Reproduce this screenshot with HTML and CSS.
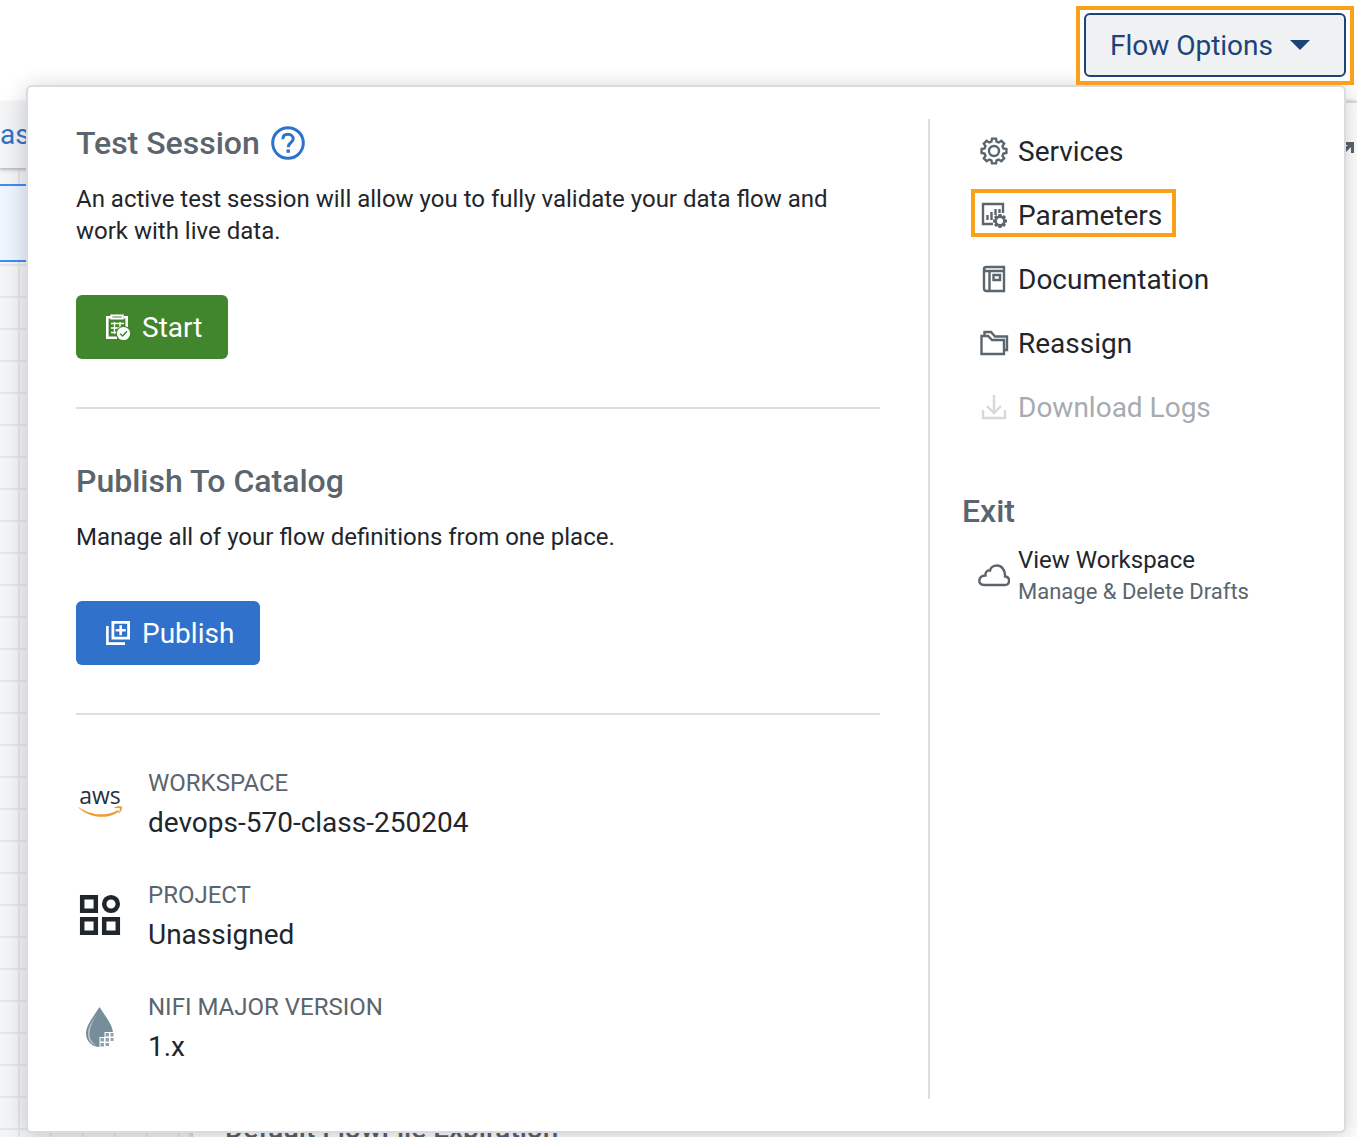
FILE: index.html
```html
<!DOCTYPE html>
<html lang="en">
<head>
<meta charset="utf-8">
<title>Flow Designer</title>
<link rel="stylesheet" href="styles.css">
</head>
<body>
<svg class="defs" aria-hidden="true">
  <symbol id="gear" viewBox="-14 -14 28 28">
    <path d="M-2.6-9.4L-2-12.4H2L2.6-9.4L4.81-8.49L7.35-10.18L10.18-7.35L8.49-4.81L9.4-2.6L12.4-2V2L9.4 2.6L8.49 4.81L10.18 7.35L7.35 10.18L4.81 8.49L2.6 9.4L2 12.4H-2L-2.6 9.4L-4.81 8.49L-7.35 10.18L-10.18 7.35L-8.49 4.81L-9.4 2.6L-12.4 2V-2L-9.4-2.6L-8.49-4.81L-10.18-7.35L-7.35-10.18L-4.81-8.49Z"/>
    <circle r="5"/>
  </symbol>
</svg>
<header class="header">
  <div class="callout">
    <button class="options-button" type="button" aria-expanded="true">Flow Options
      <svg width="20" height="10" viewBox="0 0 20 10"><path d="M0 0H20L10 10Z" fill="currentColor"/></svg>
    </button>
  </div>
</header>
<div class="toolbar"><a class="crumb" href="#">as</a></div>
<main class="workspace">
  <div class="canvas"><div class="selected-node"></div></div>
  <aside class="details">
    <svg class="expand" width="12" height="12" viewBox="0 0 12 12"><path d="M3 0H12V11H9V5L3 11L0 8L6 3H3Z" fill="#5a656d"/></svg>
    <div class="details-label">Default FlowFile Expiration</div>
  </aside>
</main>

<div class="menu">
  <div class="menu-main">
    <section class="section">
      <h2 class="title">Test Session
        <svg width="34" height="34" viewBox="0 0 34 34" fill="none" stroke="#2f72cb" stroke-width="3"><circle cx="17" cy="17" r="15.3"/><path d="M11.8 13.2C11.8 10 14 8.3 17 8.3S22.2 10.2 22.2 13C22.2 16.6 17.2 16.6 17.2 21.2"/><path d="M15.5 25.1H18.9" stroke-width="3.4"/></svg>
      </h2>
      <p class="description">An active test session will allow you to fully validate your data flow and work with live data.</p>
      <button class="action start" type="button">
        <svg width="28" height="28" viewBox="0 0 28 28" fill="none" stroke="#fff"><path d="M8 4.200H3.300V24.700H13M20 4.200H22.700V14" stroke-width="2.600"/><path d="M7.400 2.400H18.800V5.600H7.400Z" stroke-width="2"/><path d="M7 10.500H20M7 15H17M7 19.500H13M10.500 9V21M16 9V15" stroke-width="1.400"/><circle cx="19.500" cy="20.500" r="7.600" fill="#41852d" stroke="none"/><circle cx="19.500" cy="20.500" r="6.600" fill="#fff" stroke="none"/><path d="M16.200 20.700L18.600 23L23 18.200" stroke="#41852d" stroke-width="1.500"/></svg>
        Start
      </button>
    </section>
    <section class="section">
      <h2 class="title">Publish To Catalog</h2>
      <p class="description">Manage all of your flow definitions from one place.</p>
      <button class="action publish" type="button">
        <svg width="28" height="28" viewBox="0 0 28 28" fill="none" stroke="#fff" stroke-width="2.8"><path d="M8.9 3.4H24.6V19.1H8.9Z"/><path d="M3.4 7V24.6H21M16.7 6.2V16.2M11.7 11.2H21.7" stroke-width="2.6"/></svg>
        Publish
      </button>
    </section>
    <dl class="facts">
      <div class="fact">
        <svg width="48" height="48" viewBox="0 0 48 48"><text class="aws" x="24" y="25" text-anchor="middle">aws</text><path d="M3 28.200C14.500 36.400 29 37.600 41.400 31.400C42.600 30.900 43.500 32.100 42.400 32.900C31 40.500 14 39.500 2.600 28.800C2.300 28.300 2.600 28 3 28.200ZM38.300 28.600C41 26.900 45.300 26.900 46 27.800C46.500 28.800 45.200 32.900 43.100 34.500C42.700 34.700 42.500 34.500 42.700 34.100C43.400 32.400 44.200 30.200 43.800 29.600C43.200 28.800 40.400 29.100 38.600 29.300C38 29.300 38 28.900 38.300 28.600Z" fill="#f19a32"/></svg>
        <div><dt>WORKSPACE</dt><dd>devops-570-class-250204</dd></div>
      </div>
      <div class="fact">
        <svg width="48" height="48" viewBox="0 0 48 48" fill="none" stroke="#1f262c" stroke-width="4.500"><path d="M6.200 6.200H19.800V19.800H6.200ZM6.200 28.200H19.800V41.800H6.200ZM28.200 28.200H41.800V41.800H28.200Z"/><circle cx="35" cy="13" r="6.800"/></svg>
        <div><dt>PROJECT</dt><dd>Unassigned</dd></div>
      </div>
      <div class="fact">
        <svg width="48" height="48" viewBox="0 0 48 48"><path d="M23.500 4C18 13 10 22 10 30.500A13.500 13.500 0 0 0 24 44H28L37 34V30.500C37 22 29 13 23.500 4Z" fill="#768d9a"/><path d="M21 11C16 19 12 24 12 30.500C12 37 15 41 20 42C14 38 13 33 13.600 29C14 23 18 17 21 11Z" fill="#b9c6cd"/><path d="M23.500 34H28.500V29H38V39H33.500V44H23.500Z" fill="#fff"/><path d="M24.500 35H28V38.500H24.500ZM24.500 40H28V43.500H24.500ZM29.500 30H33V33.500H29.500ZM29.500 35H33V38.500H29.500ZM34.500 30H37.500V33.500H34.500ZM34.500 35H37.500V38H34.500ZM29.500 40H33V43H29.500Z" fill="#90a2ad"/></svg>
        <div><dt>NIFI MAJOR VERSION</dt><dd>1.x</dd></div>
      </div>
    </dl>
  </div>
  <nav class="menu-side">
    <div class="links">
      <button class="link" type="button"><svg class="icon" viewBox="0 0 32 32"><use href="#gear" x="2" y="2" width="28" height="28"/></svg>Services</button>
      <button class="link highlighted" type="button"><svg class="icon" viewBox="0 0 32 32"><path d="M15 25H5V5H25V14" /><path d="M9.5 21V16M13.5 21V13M17.5 16V10M21.5 14V10" stroke-width="2.4"/><g transform="translate(22 22) scale(.52)"><path d="M-2.6-9.4L-2-12.4H2L2.6-9.4L4.81-8.49L7.35-10.18L10.18-7.35L8.49-4.81L9.4-2.6L12.4-2V2L9.4 2.6L8.49 4.81L10.18 7.35L7.35 10.18L4.81 8.49L2.6 9.4L2 12.4H-2L-2.6 9.4L-4.81 8.49L-7.35 10.18L-10.18 7.35L-8.49 4.81L-9.4 2.6L-12.4 2V-2L-9.4-2.6L-8.49-4.81L-10.18-7.35L-7.35-10.18L-4.81-8.49Z" fill="#5a656d" stroke-width="2"/><circle r="5.8" fill="#fff" stroke="none"/></g></svg>Parameters</button>
      <button class="link" type="button"><svg class="icon" viewBox="0 0 32 32"><path d="M26 8V4H8.500Q6 4 6 6V25.500Q6 28 8.500 28H26V8H8.500Q6 8 6 6M11.500 8V28M15.500 12H22V17H15.500Z"/></svg>Documentation</button>
      <button class="link" type="button"><svg class="icon" viewBox="0 0 32 32"><path d="M3.500 9H10L14 13H26V27H3.500Z"/><path d="M6.500 8V5H13L17 9.500H29V23H27"/></svg>Reassign</button>
      <button class="link" type="button" disabled><svg class="icon" viewBox="0 0 32 32"><path d="M5 19V27H27V19M16 4V21M9 15L16 22L23 15"/></svg>Download Logs</button>
    </div>
    <h2 class="title">Exit</h2>
    <a class="exit-link" href="#">
      <svg class="icon" viewBox="0 0 32 32"><path d="M6 25H26.500C32.500 25 32.500 17 27 16.500C27.500 9.500 23 5.500 19 5.500C15 5.500 12.500 8 12 10.500C9.500 10 7 12 7.500 15.500C-.5 16-.5 25 6 25Z"/></svg>
      <span class="exit-text"><span>View Workspace</span><small>Manage &amp; Delete Drafts</small></span>
    </a>
  </nav>
</div>
</body>
</html>
```
FILE: styles.css
```css
* { box-sizing: border-box; }

body {
  margin: 0;
  height: 100vh;
  overflow: hidden;
  display: flex;
  flex-direction: column;
  position: relative;
  background: #fff;
  color: #1f262c;
  font-family: Roboto, sans-serif;
  font-size: 28px;
}

h2, p, dl, dd { margin: 0; }
button { font: inherit; cursor: pointer; }
svg { flex: none; }
.defs { position: absolute; width: 0; height: 0; }

/* Page behind the menu */
.header {
  flex: none;
  height: 101px;
  display: flex;
  justify-content: flex-end;
  align-items: flex-start;
  padding: 6px 3px;
}
.callout {
  position: relative;
  z-index: 2;
  border: 4px solid #f9a11b;
  padding: 3px 4px 4px;
  background: #fff;
}
.options-button {
  display: flex;
  align-items: center;
  gap: 17px;
  height: 64px;
  padding: 0 34px 0 24px;
  border: 2px solid #1b4478;
  border-radius: 6px;
  background: #f0f1f3;
  color: #1b4478;
}
.toolbar {
  flex: none;
  height: 67px;
  background: #f3f4f6;
  line-height: 68px;
  box-shadow: 0 2px 4px #0003;
  position: relative;
}
.crumb { color: #2f72cb; text-decoration: none; }
.workspace { flex: 1; display: flex; min-height: 0; }
.canvas {
  width: 193px;
  padding-top: 16px;
  background:
    linear-gradient(90deg, #e5e7ea 2px, transparent 2px) 18px 0 / 32px 100%,
    linear-gradient(#e5e7ea 2px, transparent 2px) 0 0 / 100% 32px,
    #f4f5f7;
}
.selected-node {
  height: 78px;
  border: solid #3f8cf2;
  border-width: 2px 0;
  background: #edf5fe;
}
.details {
  position: relative;
  z-index: 1;
  flex: 1;
  display: flex;
  flex-direction: column;
  justify-content: flex-end;
  margin-top: -67px;
  border-top: 2px solid #d9dbe0;
  background: #fff;
  box-shadow: -2px 0 4px #0003;
}
.expand { position: absolute; top: 39px; right: 3px; }
.details-label {
  margin: 0 0 -8px 32px;
  color: #5a656d;
  font-weight: 500;
  line-height: 32px;
}

/* Flow options menu */
.menu {
  position: absolute;
  z-index: 1;
  top: 85px;
  left: 26px;
  right: 11px;
  display: flex;
  padding: 32px 32px 32px 48px;
  border: 2px solid #d9dbe0;
  border-radius: 6px;
  background: #fff;
  box-shadow: 0 4px 24px #0003;
}
.menu-main { flex: 1; padding-right: 48px; }
.menu-side {
  width: 384px;
  padding: 8px 0 0 32px;
  border-left: 2px solid #dcdee0;
}
.title {
  display: flex;
  align-items: center;
  gap: 11px;
  color: #5a656d;
  font-size: 32px;
  font-weight: 500;
  line-height: 48px;
}
.section {
  margin-bottom: 48px;
  padding-bottom: 48px;
  border-bottom: 2px solid #dcdee0;
}
.description {
  margin: 16px 0 48px;
  font-size: 24px;
  line-height: 32px;
}
.action {
  display: flex;
  align-items: center;
  gap: 10px;
  height: 64px;
  padding: 0 26px 0 28px;
  border: 0;
  border-radius: 6px;
  color: #fff;
}
.start { background: #41852d; }
.publish { background: #3072cb; }

.facts {
  display: flex;
  flex-direction: column;
  gap: 32px;
  padding-bottom: 32px;
  line-height: 40px;
}
.fact { display: flex; align-items: center; gap: 24px; }
.fact dt { color: #5a656d; font-size: 24px; }
.aws { font: 500 23px "Open Sans", sans-serif; fill: #252f3e; }

.links {
  display: flex;
  flex-direction: column;
  align-items: flex-start;
  gap: 16px;
  margin-bottom: 56px;
}
.link, .exit-link {
  position: relative;
  display: flex;
  align-items: center;
  gap: 8px;
  padding: 0 16px;
  border: 0;
  background: none;
  color: #1f262c;
  text-decoration: none;
}
.link { height: 48px; }
.link:disabled { color: #a7abaf; }
.highlighted::after {
  content: "";
  position: absolute;
  inset: -2px 2px 2px 9px;
  border: 4px solid #f9a11b;
}
.icon {
  width: 32px;
  height: 32px;
  fill: none;
  stroke: #5a656d;
  stroke-width: 2.4;
}
.link:disabled .icon { stroke: #d6d8da; }
.exit-link { margin-top: 9px; }
.exit-text {
  display: flex;
  flex-direction: column;
  font-size: 24px;
  line-height: 32px;
}
.exit-text small { color: #5a656d; font-size: 22px; }
```
